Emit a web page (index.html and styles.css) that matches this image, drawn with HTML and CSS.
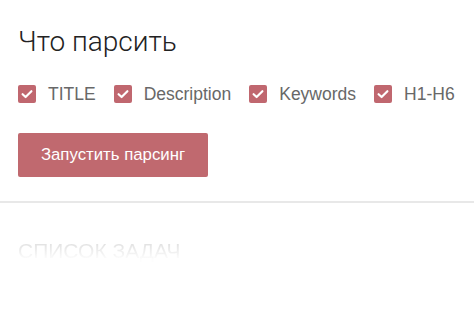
FILE: index.html
```html
<!DOCTYPE html>
<html lang="ru">
<head>
<meta charset="utf-8">
<link rel="stylesheet" href="styles.css">
</head>
<body>
<section class="parse">
  <h2 class="parse__title">Что парсить</h2>
  <div class="parse__options">
    <label class="opt"><span class="opt__box"><svg viewBox="0 0 18 18" width="18" height="18"><path d="M4.6 9.2 L7.6 12 L13.4 6.2" fill="none" stroke="#fff" stroke-width="2.2" stroke-linecap="round" stroke-linejoin="round"/></svg></span><span class="opt__text">TITLE</span></label>
    <label class="opt"><span class="opt__box"><svg viewBox="0 0 18 18" width="18" height="18"><path d="M4.6 9.2 L7.6 12 L13.4 6.2" fill="none" stroke="#fff" stroke-width="2.2" stroke-linecap="round" stroke-linejoin="round"/></svg></span><span class="opt__text">Description</span></label>
    <label class="opt"><span class="opt__box"><svg viewBox="0 0 18 18" width="18" height="18"><path d="M4.6 9.2 L7.6 12 L13.4 6.2" fill="none" stroke="#fff" stroke-width="2.2" stroke-linecap="round" stroke-linejoin="round"/></svg></span><span class="opt__text">Keywords</span></label>
    <label class="opt"><span class="opt__box"><svg viewBox="0 0 18 18" width="18" height="18"><path d="M4.6 9.2 L7.6 12 L13.4 6.2" fill="none" stroke="#fff" stroke-width="2.2" stroke-linecap="round" stroke-linejoin="round"/></svg></span><span class="opt__text">H1-H6</span></label>
  </div>
  <button class="parse__btn" type="button">Запустить парсинг</button>
</section>
<hr class="divider">
<section class="tasks">
  <h3 class="tasks__title">СПИСОК ЗАДАЧ</h3>
</section>
</body>
</html>
```
FILE: styles.css
```css
html, body {
  margin: 0;
  padding: 0;
  background: #fff;
}
body {
  font-family: "Liberation Sans", Arial, sans-serif;
  color: #333;
}
.parse {
  padding: 26px 18px 0 18px;
}
.parse__title {
  margin: 0;
  font-family: Roboto, "Liberation Sans", sans-serif;
  font-weight: 300;
  font-size: 28px;
  line-height: 32px;
  color: #222;
}
.parse__options {
  display: flex;
  align-items: center;
  gap: 18px;
  margin-top: 26px;
}
.opt {
  display: flex;
  align-items: center;
  gap: 12px;
}
.opt__box {
  width: 18px;
  height: 18px;
  border-radius: 2px;
  background: #c0676f;
  display: flex;
}
.opt__text {
  font-size: 17.5px;
  line-height: 20px;
  color: #686868;
}
.parse__btn {
  display: block;
  margin-top: 29px;
  height: 44px;
  width: 190px;
  padding: 0;
  border: 0;
  border-radius: 2px;
  background: #c0696f;
  color: #fff;
  font-family: "Liberation Sans", Arial, sans-serif;
  font-size: 16.8px;
}
.divider {
  margin: 24px 0 0 0;
  border: 0;
  height: 2px;
  background: #e8e8e8;
}
.tasks {
  padding: 0 18px;
}
.tasks__title {
  margin: 36px 0 0 0;
  font-weight: 400;
  font-size: 21px;
  line-height: 24px;
  background: linear-gradient(to bottom, #e2e2e2 20%, #fdfdfd 85%);
  -webkit-background-clip: text;
  background-clip: text;
  color: transparent;
  display: inline-block;
}
```
